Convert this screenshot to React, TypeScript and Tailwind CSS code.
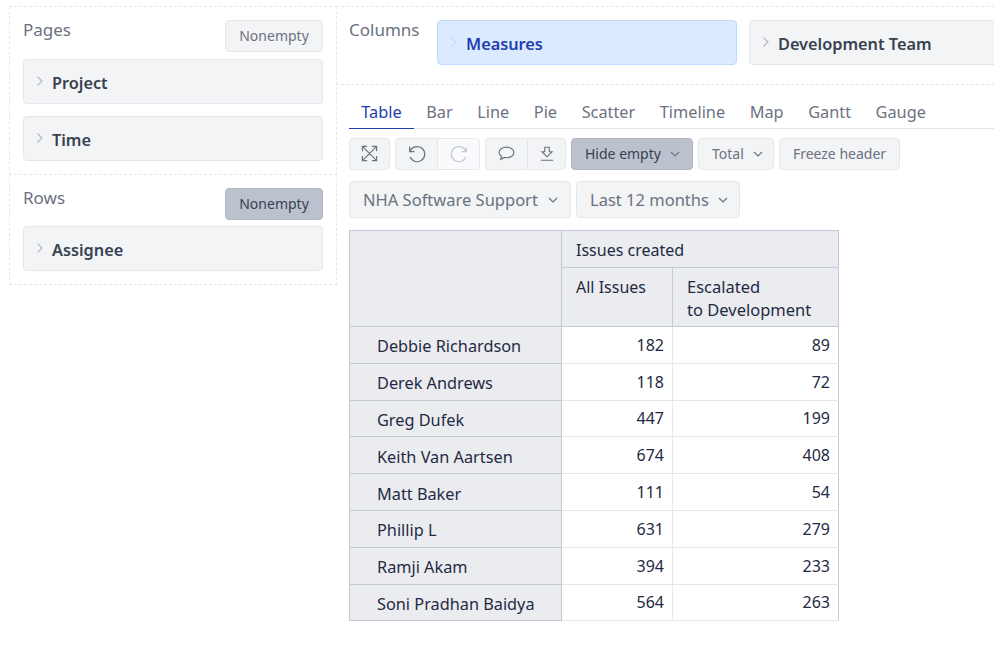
import React from "react";

function Chev({ className = "" }: { className?: string }) {
  return (
    <svg width="8" height="12" viewBox="0 0 8 12" fill="none" stroke="currentColor" strokeWidth="1.2" className={className}>
      <path d="M1.500 1.500 6 6l-4.500 4.500" />
    </svg>
  );
}
function Down({ className = "" }: { className?: string }) {
  return (
    <svg width="10" height="6" viewBox="0 0 10 6" fill="none" stroke="currentColor" strokeWidth="1.2" className={className}>
      <path d="M1 1l4 4 4-4" />
    </svg>
  );
}
function Bar({ label, active, grow }: { label: string; active?: boolean; grow?: boolean }) {
  return (
    <div
      className={
        "h-[45px] rounded-[4px] border flex items-start pl-[12px] " +
        (active ? "bg-[#dbeafe] border-[#bfdbfe] text-[#1e40af]" : "bg-[#f3f4f6] border-[#e5e7eb] text-[#374151]") +
        (grow ? " w-[300px] shrink-0" : "")
      }
    >
      <Chev className={"mt-[15px] shrink-0 " + (active ? "text-[#bfdbfe]" : "text-[#b4b9c2]")} />
      <span className="ml-[8px] mt-[11px] text-[16.300px] leading-[24px] font-semibold whitespace-nowrap">{label}</span>
    </div>
  );
}
function Btn({ children, active, className = "" }: { children: React.ReactNode; active?: boolean; className?: string }) {
  return (
    <div
      className={
        "h-[32px] rounded-[4px] border flex items-center text-[14px] pb-[1px] whitespace-nowrap " +
        (active ? "bg-[#bcc2cd] border-[#b1b7c3] text-[#374151]" : "bg-[#f3f4f6] border-[#e5e7eb] text-[#6b7280]") +
        " " + className
      }
    >
      {children}
    </div>
  );
}
const rows: [string, number, number][] = [
  ["Debbie Richardson", 182, 89],
  ["Derek Andrews", 118, 72],
  ["Greg Dufek", 447, 199],
  ["Keith Van Aartsen", 674, 408],
  ["Matt Baker", 111, 54],
  ["Phillip L", 631, 279],
  ["Ramji Akam", 394, 233],
  ["Soni Pradhan Baidya", 564, 263],
];
const tabs = ["Bar", "Line", "Pie", "Scatter", "Timeline", "Map", "Gantt", "Gauge"];

export default function App() {
  return (
    <div className="w-[994px] h-[647px] overflow-hidden bg-white flex items-start pt-[6px] pl-[9px] font-['Noto_Sans',sans-serif] text-[#374151]">
      <div className="w-[328px] shrink-0">
        <div className="h-[169px] border border-dashed border-[#e5e7eb] pl-[13px] pr-[13px] pt-[13px]">
          <div className="flex justify-between items-start h-[39px]">
            <span className="-mt-[1px] text-[17px] leading-[22px] text-[#6b7280]">Pages</span>
            <Btn className="w-[98px] justify-center">Nonempty</Btn>
          </div>
          <div className="flex flex-col gap-[12px]">
            <Bar label="Project" />
            <Bar label="Time" />
          </div>
        </div>
        <div className="h-[111px] -mt-px border border-dashed border-[#e5e7eb] pl-[13px] pr-[13px] pt-[13px]">
          <div className="flex justify-between items-start h-[38px]">
            <span className="-mt-[1px] text-[17px] leading-[22px] text-[#6b7280]">Rows</span>
            <Btn active className="w-[98px] justify-center">Nonempty</Btn>
          </div>
          <Bar label="Assignee" />
        </div>
      </div>
      <div className="flex-1 min-w-0 -ml-px">
        <div className="h-[79px] border-t border-b border-l border-dashed border-[#e5e7eb] pl-[12px] pt-[13px] flex overflow-hidden">
          <span className="-mt-[1px] w-[88px] shrink-0 text-[17px] leading-[22px] text-[#6b7280]">Columns</span>
          <div className="flex gap-[12px]">
            <Bar label="Measures" active grow />
            <Bar label="Development Team" grow />
          </div>
        </div>
        <div className="pl-[13px] pt-[9px]">
          <div className="flex h-[35px] border-b border-[#e5e7eb] text-[16.300px] leading-[37px] text-[#6b7280]">
            <div className="px-[12.300px] h-[35px] border-b border-[#1e40af] text-[#1e40af]">Table</div>
            {tabs.map((t) => (
              <div key={t} className="px-[12.300px]">{t}</div>
            ))}
          </div>
          <div className="flex gap-[5px] mt-[9px]">
            <Btn className="w-[41px] justify-center">
              <svg width="19" height="19" viewBox="0 0 16 16" fill="none" stroke="currentColor" strokeWidth="1">
                <path d="M2 2l12 12M14 2 2 14M2 6V2h4M10 2h4v4M2 10v4h4M14 10v4h-4" />
              </svg>
            </Btn>
            <div className="flex">
              <Btn className="w-[42px] justify-center rounded-r-none border-r-0">
                <svg width="22" height="22" viewBox="0 0 18 18" fill="none" stroke="currentColor" strokeWidth="1">
                  <path d="M3 3v4h4M3.300 7A6.200 6.200 0 1 1 3.400 11.500" />
                </svg>
              </Btn>
              <Btn className="w-[43px] justify-center rounded-l-none bg-[#f9fafb]">
                <svg width="22" height="22" viewBox="0 0 18 18" fill="none" stroke="#c6cad1" strokeWidth="1">
                  <path d="M15 3v4h-4M14.700 7A6.200 6.200 0 1 0 14.600 11.500" />
                </svg>
              </Btn>
            </div>
            <div className="flex">
              <Btn className="w-[42px] justify-center rounded-r-none border-r-0">
                <svg width="19" height="19" viewBox="0 0 18 18" fill="none" stroke="currentColor" strokeWidth="1.100">
                  <path d="M9 3c4 0 7 2.200 7 5s-3 5-7 5c-.8 0-1.500-.1-2.200-.3L3.500 14.500l.8-3C2.900 10.500 2 9.300 2 8c0-2.800 3-5 7-5z" />
                </svg>
              </Btn>
              <Btn className="w-[39px] justify-center rounded-l-none">
                <svg width="18" height="18" viewBox="0 0 16 16" fill="none" stroke="currentColor" strokeWidth="1">
                  <path d="M6 2h4v4h2.500L8 10.500 3.500 6H6zM2.500 13.500h11" />
                </svg>
              </Btn>
            </div>
            <Btn active className="w-[122px] pl-[13px] gap-[9px]">Hide empty<Down className="text-[#6b7280]" /></Btn>
            <Btn className="w-[76px] pl-[13px] gap-[9px]">Total<Down /></Btn>
            <Btn className="w-[121px] justify-center">Freeze header</Btn>
          </div>
          <div className="flex gap-[5px] mt-[11px]">
            <div className="h-[37px] w-[222px] rounded-[4px] border border-[#e5e7eb] bg-[#f3f4f6] flex items-center pl-[13px] pt-[1px] gap-[10px] text-[16.500px] text-[#6b7280] whitespace-nowrap">NHA Software Support<Down /></div>
            <div className="h-[37px] w-[164px] rounded-[4px] border border-[#e5e7eb] bg-[#f3f4f6] flex items-center pl-[13px] pt-[1px] gap-[9px] text-[16.500px] text-[#6b7280] whitespace-nowrap">Last 12 months<Down /></div>
          </div>
          <table className="mt-[12px] border-collapse table-fixed w-[489px] text-[16px] text-[#1f2a44] leading-[23px]">
            <colgroup>
              <col className="w-[212px]" />
              <col className="w-[111px]" />
              <col className="w-[166px]" />
            </colgroup>
            <thead>
              <tr className="h-[37px]">
                <th rowSpan={2} className="border border-[#c3c8d4] bg-[#ebecf0]"></th>
                <th colSpan={2} className="border border-[#c3c8d4] bg-[#ebecf0] font-normal text-left pl-[14px] pt-[3px]">Issues created</th>
              </tr>
              <tr className="h-[59px]">
                <th className="border border-[#c3c8d4] bg-[#ebecf0] font-normal text-left align-top pl-[14px] pt-[8px]">All Issues</th>
                <th className="border border-[#c3c8d4] bg-[#ebecf0] font-normal text-left align-top pl-[14px] pt-[7px] text-[16.500px]">Escalated<br />to Development</th>
              </tr>
            </thead>
            <tbody>
              {rows.map(([n, a, b]) => (
                <tr key={n} className="h-[36.800px]">
                  <th className="border border-[#c3c8d4] bg-[#ebecf0] font-normal text-left pl-[27px] pt-[4px] text-[16.300px]">{n}</th>
                  <td className="border border-[#e5e7eb] border-l-[#c3c8d4] text-right pr-[8px] pt-[1px]">{a}</td>
                  <td className="border border-[#e5e7eb] border-r-[#c3c8d4] text-right pr-[8px] pt-[1px]">{b}</td>
                </tr>
              ))}
            </tbody>
          </table>
        </div>
      </div>
    </div>
  );
}
